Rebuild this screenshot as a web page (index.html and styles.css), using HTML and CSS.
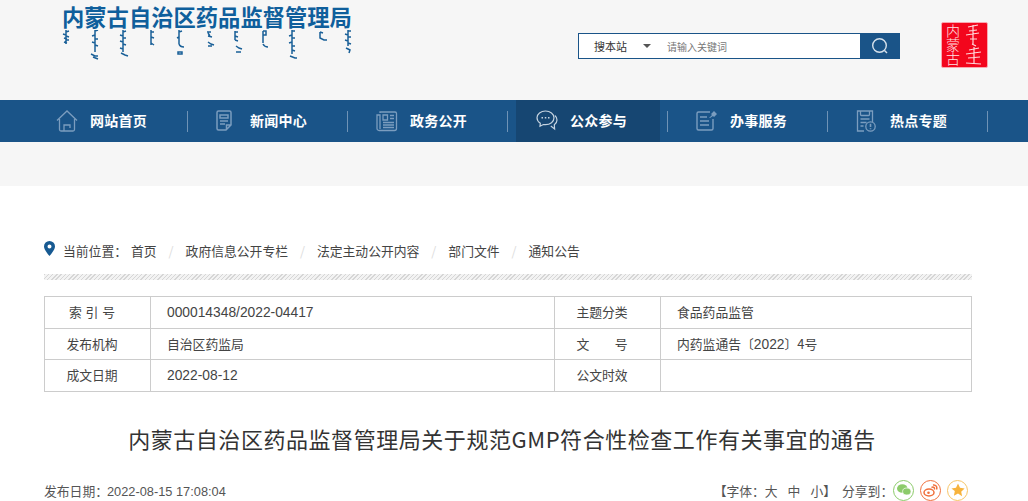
FILE: index.html
```html
<!DOCTYPE html>
<html lang="zh-CN">
<head>
<meta charset="utf-8">
<title>内蒙古自治区药品监督管理局</title>
<link rel="stylesheet" href="styles.css">
</head>
<body>
<header class="top">
  <div class="logo">
    <div class="logo-title">内蒙古自治区药品监督管理局</div>
    <svg class="logo-mn" width="290" height="32" viewBox="0 0 290 32" fill="none" stroke="#1a6098" stroke-width="1.5">
      <path d="M4 0v14M4 2l3-1M1 4l3 1M4 6l3 1M2 8l3 1M4 10l3 0M2 12l3 1"/>
      <path d="M33 0v22M33 1l3-1M33 5l-3 1M33 9l3 0M30 12l3 1M33 15l3 1M29 24l4 2 3 0M31 27l5 2"/>
      <path d="M61 0v22M61 2l3-1M58 5l3 1M61 8l3 0M58 11l3 1M61 14l3 1M58 18l3 1M59 23l4 2 3 1"/>
      <path d="M89 0v15M89 2l3 0M89 7l3 1M89 13l3 2"/>
      <path d="M117 0v14M117 2l3-1M117 7l-2 1M117 14c1 3 3 3 5 3M116 22h4v2h-4z"/>
      <path d="M145 2l4 0M146 6l4 1M146 3l2 3M146 12l3 2 3 1M146 16l4 0"/>
      <path d="M173 1v9M173 2l3 0M173 6l3 1M173 10l3 1M174 16l3 2 3 1M174 22l5 0"/>
      <path d="M201 1v12M201 1h3v4h-3M201 14c1 2 3 3 5 3"/>
      <path d="M230 0v24M230 1l3 0M230 5l-3 1M230 8l3 0M230 12l-3 1M230 16l3 0M230 20l3 1M228 26l5 2 2 0"/>
      <path d="M258 2v6l4 2 3 0M258 2l3 1"/>
      <path d="M286 0v16M286 1l3 0M283 4l3 1M286 7l3 0M283 10l3 1M286 13l3 1M284 18l4 2-1 3"/>
    </svg>
  </div>
  <form class="search">
    <div class="search-scope"><span>搜本站</span><i class="caret"></i></div>
    <div class="search-input">请输入关键词</div>
    <div class="search-btn">
      <svg width="18" height="18" viewBox="0 0 18 18" fill="none" stroke="#d7e2ec" stroke-width="1.4"><circle cx="8.500" cy="8.500" r="6.800"/><path d="M13.500 13.500l2.500 2.500"/></svg>
    </div>
  </form>
  <div class="seal">
    <div class="seal-cn">内蒙古</div>
    <svg class="seal-mn" width="20" height="42" viewBox="0 0 20 42" fill="none" stroke="#ffd9dc" stroke-width="1.200">
      <path d="M10 1v19M5 3l10-2M6 7l8-1M3 11l13-2M7 15l7 0M9 20l4 2"/>
      <path d="M11 23v16M6 26l10-2M3 30l15-2M5 34l12-1M3 39l15 1"/>
    </svg>
  </div>
</header>

<nav class="nav">
  <div class="nav-item"><a class="nav-link">
    <svg class="nav-ico" width="22" height="22" viewBox="0 0 22 22" fill="none" stroke="#7b9dbf" stroke-width="1.300"><path d="M1 10.500L11 1l10 9.500M3.500 9v10.500a1.500 1.500 0 0 0 1.500 1.500h12a1.500 1.500 0 0 0 1.500-1.500V9M8 21v-6h6v3"/></svg>
    <span>网站首页</span></a><i class="nav-sep"></i></div>
  <div class="nav-item"><a class="nav-link">
    <svg class="nav-ico" width="22" height="22" viewBox="0 0 22 22" fill="none" stroke="#7b9dbf" stroke-width="1.500"><path d="M1 2.500A1.500 1.500 0 0 1 2.500 1h11A1.500 1.500 0 0 1 15 2.500V15l-5 5H2.500A1.500 1.500 0 0 1 1 18.500zM15 15h-4.500v5"/><path d="M4 5h8v3H4zM4 11h8M4 14h5"/></svg>
    <span>新闻中心</span></a><i class="nav-sep"></i></div>
  <div class="nav-item"><a class="nav-link">
    <svg class="nav-ico" width="22" height="22" viewBox="0 0 22 22" fill="none" stroke="#7b9dbf" stroke-width="1.300"><path d="M4 3V2h15a1.500 1.500 0 0 1 1.500 1.500v15a2 2 0 0 1-2 2H3a2 2 0 0 1-2-2V5h3v14"/><path d="M7 5h4.500v5H7zM14 5.500h4M14 8.500h4M7 12.500h11M7 15h11M7 17.500h11"/></svg>
    <span>政务公开</span></a><i class="nav-sep"></i></div>
  <div class="nav-item is-active"><a class="nav-link">
    <svg class="nav-ico" width="22" height="22" viewBox="0 0 22 22" fill="none" stroke="#c5d3e0" stroke-width="1.200"><path d="M9.500 1C4.800 1 1 4 1 7.800c0 2.300 1.300 4.200 3.300 5.500l-.3 3 3.300-1.800c.7.100 1.400.2 2.200.2 4.700 0 8.500-3.100 8.500-6.900S14.200 1 9.500 1z"/><path d="M18.800 5.500c1.400 1.100 2.200 2.700 2.200 4.400 0 2-1.100 3.700-2.700 4.800l.3 4.300-3.800-3"/><path d="M5.500 7.800h1.500M8.800 7.800h1.500M12 7.800h1.500" stroke-width="1.600"/></svg>
    <span>公众参与</span></a><i class="nav-sep"></i></div>
  <div class="nav-item"><a class="nav-link">
    <svg class="nav-ico" width="22" height="22" viewBox="0 0 22 22" fill="none" stroke="#7b9dbf" stroke-width="1.400"><path d="M14 2H2.500A1.500 1.500 0 0 0 1 3.500v15A1.500 1.500 0 0 0 2.500 20h13a1.500 1.500 0 0 0 1.500-1.500V9"/><path d="M4 7h7M4 11h9M4 15h9"/><path d="M13 8l3-3-1-1 3-3 3 3-3 3-1-1-3 2z" fill="#7b9dbf" stroke="none"/></svg>
    <span>办事服务</span></a><i class="nav-sep"></i></div>
  <div class="nav-item"><a class="nav-link">
    <svg class="nav-ico" width="22" height="22" viewBox="0 0 22 22" fill="none" stroke="#7b9dbf" stroke-width="1.300"><path d="M8 21H1.500V1h15v11"/><path d="M4.500 1v3.500a1 1 0 0 0 1 1h7a1 1 0 0 0 1-1V1M4.500 9h9M4.500 12.500h6M4.500 16h3"/><circle cx="14.500" cy="16.500" r="4.700"/><path d="M14.500 13.800v3.300M14.500 18.200v1" stroke-width="1.600"/></svg>
    <span>热点专题</span></a><i class="nav-sep"></i></div>
</nav>

<div class="band"></div>

<main class="content">
  <div class="crumbs">
    <svg class="pin" width="11" height="15" viewBox="0 0 11 15"><path fill-rule="evenodd" fill="#175a92" d="M5.500 0A5.500 5.500 0 0 0 0 5.500C0 9 5.500 15 5.500 15S11 9 11 5.500A5.500 5.500 0 0 0 5.500 0zm0 3.500a2 2 0 1 1 0 4 2 2 0 0 1 0-4z"/></svg>
    <span class="crumb-label">当前位置：</span>
    <a>首页</a><i>/</i><a>政府信息公开专栏</a><i>/</i><a>法定主动公开内容</a><i>/</i><a>部门文件</a><i>/</i><a>通知公告</a>
  </div>
  <div class="stripe"></div>
  <table class="info">
    <colgroup><col class="c1"><col class="c2"><col class="c3"><col class="c4"></colgroup>
    <tr><th>索 引 号</th><td class="num">000014348/2022-04417</td><th>主题分类</th><td>食品药品监管</td></tr>
    <tr class="row-mid"><th>发布机构</th><td>自治区药监局</td><th>文&emsp;&emsp;号</th><td>内药监通告〔<span class="num">2022</span>〕4号</td></tr>
    <tr><th>成文日期</th><td class="num">2022-08-12</td><th>公文时效</th><td></td></tr>
  </table>
  <h1 class="headline">内蒙古自治区药品监督管理局关于规范GMP符合性检查工作有关事宜的通告</h1>
  <div class="meta">
    <div class="meta-date">发布日期：<span class="num">2022-08-15 17:08:04</span></div>
    <div class="meta-tools">
      <span class="fontsize">【字体：大<b>中</b><b>小</b>】</span>
      <span class="share-label">分享到：</span>
      <span class="share share-wx"><svg width="14" height="12" viewBox="0 0 14 12"><ellipse cx="5.300" cy="4.500" rx="5.300" ry="4.300" fill="#8ccb6a"/><ellipse cx="9.800" cy="7.500" rx="4.200" ry="3.500" fill="#8ccb6a" stroke="#fff" stroke-width=".7"/></svg></span>
      <span class="share share-wb"><svg width="15" height="13" viewBox="0 0 15 13" fill="none" stroke="#f0703c" stroke-width="1.500"><ellipse cx="6" cy="8.500" rx="5" ry="3.500"/><circle cx="5.500" cy="8.800" r="1.300" fill="#f0703c" stroke="none"/><path d="M8.500 3.500c2-1 3.500.2 2.800 2M10 1c3-.5 4.500 2 3.500 4.500"/></svg></span>
      <span class="share share-fav"><svg width="14" height="14" viewBox="0 0 24 24"><path fill="#f7b33c" d="M12 1l3.400 7.300 7.900 1-5.800 5.500 1.500 7.900L12 17.900l-7 3.800 1.500-7.900L.7 9.300l7.900-1z"/></svg></span>
    </div>
  </div>
</main>
</body>
</html>
```
FILE: styles.css
```css
* { box-sizing: border-box; }
html, body { margin: 0; padding: 0; overflow: hidden; }
body {
  background: #fff;
  color: #333;
  font-family: "Noto Sans CJK SC", "Liberation Sans", sans-serif;
  font-size: 12.8px;
}

.top {
  height: 100px;
  background: #f6f6f6;
  display: flex;
  padding-left: 62px;
}
.logo { width: 290px; }
.logo-title {
  margin-top: 3px;
  height: 27px;
  font-size: 22.3px;
  line-height: 27px;
  font-weight: 700;
  color: #0f5f9c;
  white-space: nowrap;
}
.logo-mn { display: block; }

.search {
  margin: 33px 0 0 226px;
  width: 322px;
  height: 26px;
  display: flex;
  align-items: center;
  background: #fff;
  border: 1px solid #1a5488;
  border-right: 0;
}
.search-scope {
  width: 88px;
  padding-left: 15px;
  display: flex;
  align-items: center;
  font-size: 11px;
  color: #333;
}
.caret {
  margin-left: 16px;
  border: 4px solid transparent;
  border-top: 4px solid #555;
  border-bottom: 0;
}
.search-input { flex: 1; font-size: 10px; color: #777; }
.search-btn {
  width: 40px;
  height: 26px;
  margin: -1px 0;
  background: #1a5488;
  display: flex;
  align-items: center;
  justify-content: center;
}

.seal {
  margin: 22px 0 0 41px;
  width: 47px;
  height: 46px;
  background: #f3061d;
  border: 1px solid #f9a8b0;
  border-radius: 2px;
  display: flex;
  align-items: center;
  justify-content: center;
  gap: 3px;
}
.seal-cn {
  writing-mode: vertical-rl;
  font-size: 14px;
  line-height: 14px;
  font-weight: 300;
  color: #ffe3e5;
}

.nav {
  height: 42px;
  background: #1a5488;
  display: flex;
  padding-left: 28px;
}
.nav-item { width: 160px; display: flex; align-items: center; }
.nav-link {
  width: 144px;
  height: 42px;
  margin-left: 8px;
  padding-left: 20px;
  display: flex;
  align-items: center;
  gap: 12px;
  color: #fff;
  font-size: 14px;
  font-weight: 700;
}
.nav-link span { letter-spacing: .25px; padding-bottom: 2px; }
.nav-ico { flex: none; }
.is-active .nav-link { background: #164672; }
.nav-sep { width: 1px; height: 21px; margin-left: 7px; background: #6f93b6; }

.band { height: 44px; background: #f6f6f6; }

.content { padding: 0 56px 0 44px; }
.crumbs {
  padding-top: 40px;
  height: 88px;
  display: flex;
  align-items: center;
  color: #444;
}
.crumbs .pin { flex: none; margin: -3px 8px 0 0; }
.crumb-label { width: 68px; }
.crumbs i { width: 29px; text-align: center; font-style: normal; color: #ddd; }

.stripe {
  height: 6px;
  background: repeating-linear-gradient(135deg, #d6d6d6 0 1px, #f3f3f3 1px 3px);
}

.info {
  margin-top: 16px;
  width: 928px;
  border-collapse: collapse;
  table-layout: fixed;
}
.c1 { width: 106px; }
.c2 { width: 404px; }
.c3 { width: 106px; }
.info th, .info td {
  height: 32px;
  padding: 0 0 2px;
  border: 1px solid #ccc;
  font-weight: 400;
  color: #444;
}
.info .row-mid th, .info .row-mid td { height: 31px; }
.info th { padding-right: 11px; word-spacing: 1px; }
.info td { padding-left: 16px; }
.num { font-family: "Liberation Sans", sans-serif; }
.info .num { font-size: 13.8px; }
.info td.num { padding-bottom: 0; }

.headline {
  margin: 30px 0 0;
  padding-right: 12px;
  height: 32px;
  font-size: 22px;
  letter-spacing: .55px;
  line-height: 32px;
  font-weight: 400;
  text-align: center;
  color: #333;
}
.meta {
  margin-top: 24px;
  display: flex;
  justify-content: space-between;
  align-items: center;
  height: 24px;
  color: #555;
}
.meta-date .num { font-size: 12.8px; margin-left: -1px; }
.meta-tools { display: flex; align-items: center; margin-right: 4px; }
.fontsize { white-space: nowrap; }
.fontsize b { font-weight: 400; margin-left: 10px; }
.share-label { margin-left: 6px; flex: none; width: 51px; white-space: nowrap; }
.share {
  width: 21px;
  height: 21px;
  border-radius: 50%;
  border: 1px solid;
  display: flex;
  align-items: center;
  justify-content: center;
  margin-right: 6px;
  background: #fff;
}
.share:last-child { margin-right: 0; }
.share-wx { border-color: #8ccb6a; }
.share-wb { border-color: #f0703c; }
.share-fav { border-color: #f7c566; }
```
